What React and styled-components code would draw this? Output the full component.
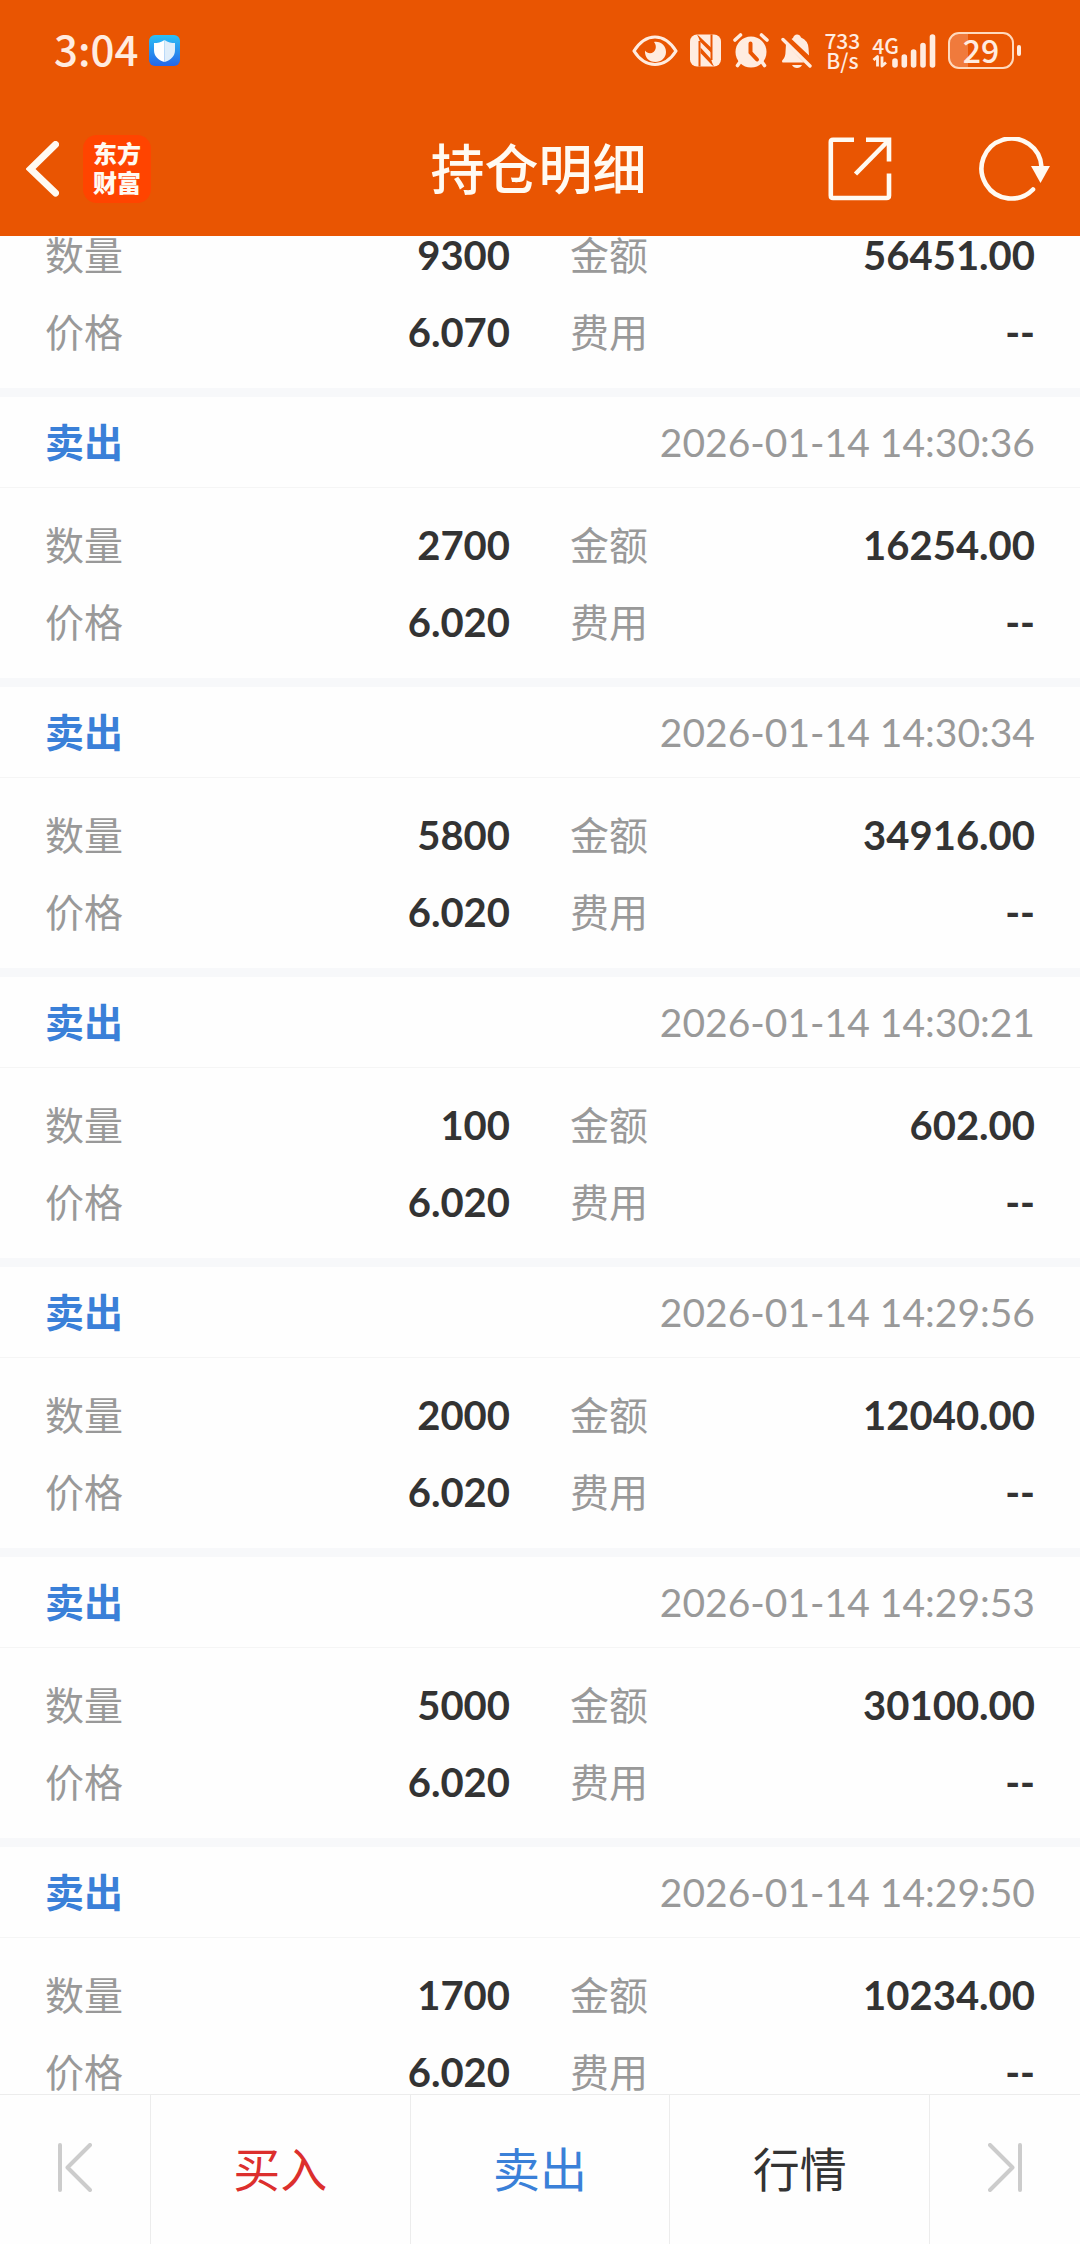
import { useLayoutEffect, useRef } from "react";
import styled, { createGlobalStyle } from "styled-components";

const GlobalStyle = createGlobalStyle`
  * {
    box-sizing: border-box;
  }
  :root {
    --brand: #e95502;
    --sell: #3a80d8;
    --buy: #dc2f2d;
    --text: #333333;
    --muted: #999999;
    --line: #ececec;
    --band: #f7f8fa;
    --status: #ffece0;
    --numbers: Lato, "Noto Sans CJK SC", sans-serif;
  }
  body {
    margin: 0;
    background-color: #fefefe;
    font-family: "Noto Sans CJK SC", sans-serif;
    color: var(--text);
  }
  button {
    border: none;
    padding: 0;
    background: none;
    font-family: inherit;
    cursor: pointer;
  }
`;

const Screen = styled.div`
  height: 100vh;
  display: flex;
  flex-direction: column;
`;

const TopArea = styled.header`
  background-color: var(--brand);
  color: #fffaf2;
`;

const StatusBar = styled.div`
  height: 101px;
  padding: 0 59px 0 54px;
  display: flex;
  align-items: center;
  justify-content: space-between;
  color: var(--status);
`;

const StatusGroup = styled.div`
  display: flex;
  align-items: center;
  gap: ${({ $gap }) => $gap}px;
`;

const Clock = styled.time`
  padding-bottom: 5px;
  font-size: 42px;
  line-height: 44px;
  font-weight: 500;
`;

const NetSpeed = styled.div`
  padding-bottom: 2px;
  font-size: 21px;
  line-height: 20px;
  font-weight: 500;
  text-align: center;
`;

const Signal = styled.div`
  display: flex;
  align-items: flex-end;
`;

const SignalType = styled.div`
  display: flex;
  flex-direction: column;
  font-size: 21px;
  line-height: 20px;
  font-weight: 500;
`;

const Battery = styled.div`
  display: flex;
  align-items: center;
  gap: 3px;
  &::after {
    content: "";
    width: 4px;
    height: 11px;
    border-radius: 2px;
    background-color: var(--status);
  }
`;

const BatteryBody = styled.div`
  width: 66px;
  height: 37px;
  border: 2px solid #ffd9bd;
  border-radius: 11px;
  background: linear-gradient(to right, #f07a3c 29%, transparent 29%);
  font-size: 32px;
  line-height: 30px;
  font-weight: 500;
  text-align: center;
`;

const NavBar = styled.div`
  height: 135px;
  padding: 0 29px 0 26px;
  display: grid;
  grid-template-columns: 1fr auto 1fr;
  align-items: center;
`;

const NavSide = styled.div`
  display: flex;
  align-items: center;
  gap: ${({ $gap }) => $gap}px;
  justify-content: ${({ $end }) => ($end ? "flex-end" : "flex-start")};
`;

const IconButton = styled.button`
  display: flex;
  color: #fffaf2;
`;

const Logo = styled.div`
  width: 68px;
  height: 68px;
  padding-bottom: 4px;
  border-radius: 14px;
  background-color: #ff4400;
  display: flex;
  align-items: center;
  justify-content: center;
  font-size: 24px;
  line-height: 29px;
  font-weight: 900;
  text-align: center;
`;

const Title = styled.h1`
  margin: 0;
  padding-bottom: 4px;
  font-size: 54px;
  line-height: 80px;
  font-weight: 500;
`;

const TradeList = styled.main`
  flex: 1;
  min-height: 0;
  overflow-y: auto;
  scrollbar-width: none;
`;

const Card = styled.article`
  border-bottom: 9px solid var(--band);
`;

const CardHead = styled.div`
  height: 90px;
  padding: 14px 45px 0;
  display: flex;
  align-items: baseline;
  justify-content: space-between;
`;

const Side = styled.h2`
  margin: 0;
  font-size: 39px;
  line-height: 58px;
  font-weight: 700;
  color: var(--sell);
`;

const Stamp = styled.time`
  font-family: var(--numbers);
  font-size: 39px;
  line-height: 58px;
  color: var(--muted);
`;

const CardBody = styled.dl`
  margin: 0;
  padding: 17px 45px 19px;
  border-top: 1px solid #f5f5f5;
  display: grid;
  grid-template-columns: 1fr 1fr;
  column-gap: 60px;
`;

const Field = styled.div`
  height: 77px;
  padding-top: 9px;
  display: flex;
  align-items: baseline;
  justify-content: space-between;
`;

const Label = styled.dt`
  font-size: 39px;
  line-height: 58px;
  color: var(--muted);
`;

const Value = styled.dd`
  margin: 0;
  font-family: var(--numbers);
  font-size: 40px;
  line-height: 58px;
  font-weight: 700;
`;

const BottomBar = styled.nav`
  height: 150px;
  border-top: 1px solid var(--line);
  display: grid;
  grid-template-columns: 150px 1fr 1fr 1fr 151px;
`;

const BarButton = styled.button`
  padding-bottom: 5px;
  display: flex;
  align-items: center;
  justify-content: center;
  font-size: 47px;
  line-height: 70px;
  color: ${({ $color }) => $color};
  & + & {
    border-left: 1px solid var(--line);
  }
`;

const trades = [
  { qty: "9300", amount: "56451.00", price: "6.070" },
  { time: "2026-01-14 14:30:36", qty: "2700", amount: "16254.00", price: "6.020" },
  { time: "2026-01-14 14:30:34", qty: "5800", amount: "34916.00", price: "6.020" },
  { time: "2026-01-14 14:30:21", qty: "100", amount: "602.00", price: "6.020" },
  { time: "2026-01-14 14:29:56", qty: "2000", amount: "12040.00", price: "6.020" },
  { time: "2026-01-14 14:29:53", qty: "5000", amount: "30100.00", price: "6.020" },
  { time: "2026-01-14 14:29:50", qty: "1700", amount: "10234.00", price: "6.020" },
];

const ShieldIcon = () => (
  <svg width="31" height="31" viewBox="0 0 31 31">
    <defs>
      <linearGradient id="shieldBg" x1="0" y1="0" x2="0" y2="1">
        <stop offset="0" stopColor="#2cc0f5" />
        <stop offset="1" stopColor="#2566e8" />
      </linearGradient>
    </defs>
    <rect width="31" height="31" rx="6" fill="url(#shieldBg)" />
    <path d="M15.500 5 C12 7.500 8.500 8 5 8 V15 C5 21 9 25 15.500 27 Z" fill="#fff" />
    <path d="M15.500 5 C19 7.500 22.500 8 26 8 V15 C26 21 22 25 15.500 27 Z" fill="#dfeefa" />
  </svg>
);

const EyeIcon = () => (
  <svg width="46" height="32" viewBox="0 0 46 32" fill="none">
    <path
      d="M2 16 C8 6.500 15 2 23 2 S38 6.500 44 16 C38 25.500 31 29.500 23 29.500 S8 25.500 2 16 Z"
      stroke="currentColor"
      strokeWidth="3.200"
      strokeLinejoin="round"
    />
    <path
      d="M22 7 C29 6 34 11 34 17 C34 23 29 27 23.500 27 C17 27 12.500 22.500 13 15.500 C15 18.500 19 19 21.500 17 C24.500 14.500 24.500 10 22 7 Z"
      fill="currentColor"
    />
  </svg>
);

const NfcIcon = () => (
  <svg width="31" height="33" viewBox="0 0 31 33">
    <rect width="31" height="32" y="0.500" rx="7" fill="currentColor" />
    <path d="M9.500 7 V32.500 M21.500 26 V0.500" stroke="var(--brand)" strokeWidth="2" fill="none" />
    <path
      d="M7 0.500 Q9 1.500 11 4 L21 13.500 V18.500 L10 7.500 Q9 4 7 0.500 Z M24 32.500 Q22 31.500 20 29 L10.500 19 V13.500 L21 25 Q22 29 24 32.500 Z"
      fill="var(--brand)"
    />
  </svg>
);

const AlarmIcon = () => (
  <svg width="36" height="35" viewBox="0 0 36 35" fill="none">
    <circle cx="18" cy="19" r="15.500" fill="currentColor" />
    <path
      d="M2 7 L7.500 2 M34 7 L28.500 2 M7 29 L4.500 32.500 M29 29 L31.500 32.500"
      stroke="currentColor"
      strokeWidth="3.600"
      strokeLinecap="round"
    />
    <path d="M17.500 10.500 V19.500 L24 26.500" stroke="var(--brand)" strokeWidth="4" strokeLinecap="round" />
  </svg>
);

const BellOffIcon = () => (
  <svg width="31" height="34" viewBox="0 0 31 34" fill="none">
    <path
      d="M12 4 Q13 0.500 16 0.500 Q19 0.500 20 3.500 Q27 6.500 27.500 14 L28 21.500 L10.500 5 Z"
      fill="currentColor"
    />
    <path d="M5 10 L23 28.500 H1.500 Q0 27 2 25.500 Q4.500 23 4.500 18 Z" fill="currentColor" />
    <path d="M2 5.500 L29 32" stroke="currentColor" strokeWidth="3.400" strokeLinecap="round" />
    <path d="M11 31 H21 Q19.500 34 16 34 T11 31 Z" fill="currentColor" />
  </svg>
);

const DataArrows = () => (
  <svg width="17" height="13" viewBox="0 0 17 13" fill="none">
    <path d="M1.500 5 L5.500 1.500 V11.500 M14 7.500 L10 11 V1.500" stroke="currentColor" strokeWidth="2.800" strokeLinejoin="round" />
  </svg>
);

// the first bar sits under the network type, so the bars tuck in below it
const SignalBars = styled(({ className }) => (
  <svg className={className} width="44" height="34" viewBox="0 0 44 34" stroke="currentColor" strokeWidth="5.600" strokeLinecap="round">
    <path d="M3 27 V31 M12.300 23 V31 M21.600 18 V31 M31 11.500 V31 M40.500 3 V31" />
  </svg>
))`
  margin-left: -7px;
`;

const BackIcon = () => (
  <svg width="33" height="56" viewBox="0 0 33 56" fill="none">
    <path d="M29.500 3.500 L4.500 28 L29.500 52" stroke="currentColor" strokeWidth="7" strokeLinecap="round" />
  </svg>
);

const ShareIcon = () => (
  <svg width="64" height="64" viewBox="0 0 64 64" fill="none" stroke="currentColor" strokeWidth="4.600">
    <path d="M26 2.800 H5 Q2.800 2.800 2.800 5 V58.500 Q2.800 61 5 61 H58.500 Q61 61 61 58.500 V36.500" />
    <path d="M38 2.800 H61 V24.500" />
    <path d="M61 3 L27.500 37" />
  </svg>
);

const RefreshIcon = () => (
  <svg width="72" height="64" viewBox="0 0 72 64" fill="none">
    <path d="M62.500 30 A30 30 0 1 0 54 52.500" stroke="currentColor" strokeWidth="4.600" strokeLinecap="round" />
    <path d="M52 29 H71 L61.500 46 Z" fill="currentColor" />
  </svg>
);

const EdgeIcon = ({ flip }) => (
  <svg width="34" height="49" viewBox="0 0 34 49" fill="none" stroke="currentColor" strokeWidth="4" strokeLinecap="round" strokeLinejoin="round">
    {flip ? <path d="M32 2 V47 M2 2 L24.500 24.500 L2 47" /> : <path d="M2 2 V47 M32 2 L9.500 24.500 L32 47" />}
  </svg>
);

const TradeCard = ({ time, qty, amount, price }) => (
  <Card>
    {time && (
      <CardHead>
        <Side>卖出</Side>
        <Stamp>{time}</Stamp>
      </CardHead>
    )}
    <CardBody>
      <Field>
        <Label>数量</Label>
        <Value>{qty}</Value>
      </Field>
      <Field>
        <Label>金额</Label>
        <Value>{amount}</Value>
      </Field>
      <Field>
        <Label>价格</Label>
        <Value>{price}</Value>
      </Field>
      <Field>
        <Label>费用</Label>
        <Value>--</Value>
      </Field>
    </CardBody>
  </Card>
);

const App = () => {
  const listRef = useRef(null);

  useLayoutEffect(() => {
    listRef.current.scrollTop = 39;
  }, []);

  return (
    <Screen>
      <GlobalStyle />
      <TopArea>
        <StatusBar>
          <StatusGroup $gap={11}>
            <Clock>3:04</Clock>
            <ShieldIcon />
          </StatusGroup>
          <StatusGroup $gap={12}>
            <EyeIcon />
            <NfcIcon />
            <AlarmIcon />
            <BellOffIcon />
            <NetSpeed>
              733
              <br />
              B/s
            </NetSpeed>
            <Signal>
              <SignalType>
                4G
                <DataArrows />
              </SignalType>
              <SignalBars />
            </Signal>
            <Battery>
              <BatteryBody>29</BatteryBody>
            </Battery>
          </StatusGroup>
        </StatusBar>
        <NavBar>
          <NavSide $gap={24}>
            <IconButton aria-label="返回">
              <BackIcon />
            </IconButton>
            <Logo>
              东方
              <br />
              财富
            </Logo>
          </NavSide>
          <Title>持仓明细</Title>
          <NavSide $gap={87} $end>
            <IconButton aria-label="分享">
              <ShareIcon />
            </IconButton>
            <IconButton aria-label="刷新">
              <RefreshIcon />
            </IconButton>
          </NavSide>
        </NavBar>
      </TopArea>
      <TradeList ref={listRef}>
        {trades.map((trade, i) => (
          <TradeCard key={i} {...trade} />
        ))}
      </TradeList>
      <BottomBar>
        <BarButton $color="#cccccc" aria-label="上一个">
          <EdgeIcon />
        </BarButton>
        <BarButton $color="var(--buy)">买入</BarButton>
        <BarButton $color="var(--sell)">卖出</BarButton>
        <BarButton $color="var(--text)">行情</BarButton>
        <BarButton $color="#cccccc" aria-label="下一个">
          <EdgeIcon flip />
        </BarButton>
      </BottomBar>
    </Screen>
  );
};

export default App;
